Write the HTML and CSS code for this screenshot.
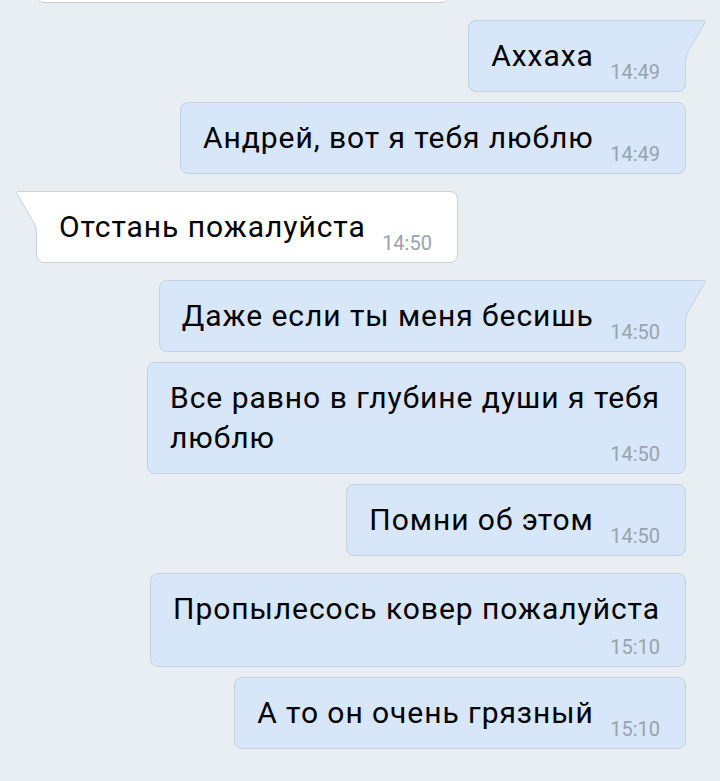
FILE: index.html
```html
<!DOCTYPE html>
<html lang="ru">
<head>
<meta charset="utf-8">
<title>Чат</title>
<link rel="stylesheet" href="styles.css">
</head>
<body>
<main class="chat">
  <div class="bubble in stub"></div>

  <div class="bubble out group tailed">Аххаха <span class="time">14:49</span><svg class="tail" width="24" height="40" viewBox="0 0 24 40" aria-hidden="true"><path class="tail-fill" d="M0 0H20Q23.5 0 21.6 3.2L9 25Q3 33 2.5 40H0Z"/><path class="tail-line" d="M0 0.5H20Q23.5 0.5 21.6 3.2L9 25Q3 33 2.5 40"/></svg></div>
  <div class="bubble out">Андрей, вот я тебя люблю <span class="time">14:49</span></div>

  <div class="bubble in group tailed">Отстань пожалуйста <span class="time">14:50</span><svg class="tail" width="24" height="40" viewBox="0 0 24 40" aria-hidden="true"><path class="tail-fill" d="M0 0H20Q23.5 0 21.6 3.2L9 25Q3 33 2.5 40H0Z"/><path class="tail-line" d="M0 0.5H20Q23.5 0.5 21.6 3.2L9 25Q3 33 2.5 40"/></svg></div>

  <div class="bubble out group tailed">Даже если ты меня бесишь <span class="time">14:50</span><svg class="tail" width="24" height="40" viewBox="0 0 24 40" aria-hidden="true"><path class="tail-fill" d="M0 0H20Q23.5 0 21.6 3.2L9 25Q3 33 2.5 40H0Z"/><path class="tail-line" d="M0 0.5H20Q23.5 0.5 21.6 3.2L9 25Q3 33 2.5 40"/></svg></div>
  <div class="bubble out spread">Все равно в глубине души я тебя<br>люблю <span class="time">14:50</span></div>
  <div class="bubble out">Помни об этом <span class="time">14:50</span></div>

  <div class="bubble out group stacked">Пропылесось ковер пожалуйста <span class="time">15:10</span></div>
  <div class="bubble out">А то он очень грязный <span class="time">15:10</span></div>
</main>
</body>
</html>
```

FILE: styles.css
```css
* {
  box-sizing: border-box;
}

html,
body {
  margin: 0;
}

body {
  width: 720px;
  height: 781px;
  overflow: hidden;
  background: #e9eef3;
  font-family: Roboto, "Noto Sans", sans-serif;
}

.chat {
  display: flex;
  flex-direction: column;
  align-items: flex-start;
  padding: 0 34px 0 36px;
}

.bubble {
  position: relative;
  max-width: 539px;
  margin-top: 10px;
  padding: 15px 25px 15px 22px;
  border: 1px solid #c3d1e0;
  border-radius: 8px;
  background: #ffffff;
  color: #000000;
  font-size: 30px;
  letter-spacing: 0.95px;
  line-height: 40px;
}

.bubble.out {
  align-self: flex-end;
  background: #d7e6f8;
}

.bubble.group {
  margin-top: 17px;
}

.bubble.stub {
  width: 414px;
  height: 72px;
  margin-top: -69px;
}

.time {
  margin-left: 8px;
  color: #99a3ae;
  font-size: 20px;
  letter-spacing: 0;
  line-height: 0;
  vertical-align: -13px;
  white-space: nowrap;
}

.bubble.spread {
  width: 539px;
  text-align-last: justify;
}

.bubble.stacked {
  padding-bottom: 8px;
}

.bubble.stacked .time {
  display: block;
  margin: 7px 0 0;
  line-height: 22px;
  text-align: right;
  vertical-align: baseline;
}

.tail {
  position: absolute;
  top: -1px;
  left: calc(100% - 2px);
  display: block;
}

.bubble.in .tail {
  left: auto;
  right: calc(100% - 2px);
  transform: scaleX(-1);
}

.bubble.out.tailed {
  border-top-right-radius: 0;
}

.bubble.in.tailed {
  border-top-left-radius: 0;
}

.tail-fill {
  fill: #ffffff;
}

.bubble.out .tail-fill {
  fill: #d7e6f8;
}

.tail-line {
  fill: none;
  stroke: #c3d1e0;
  stroke-width: 1;
}
```
